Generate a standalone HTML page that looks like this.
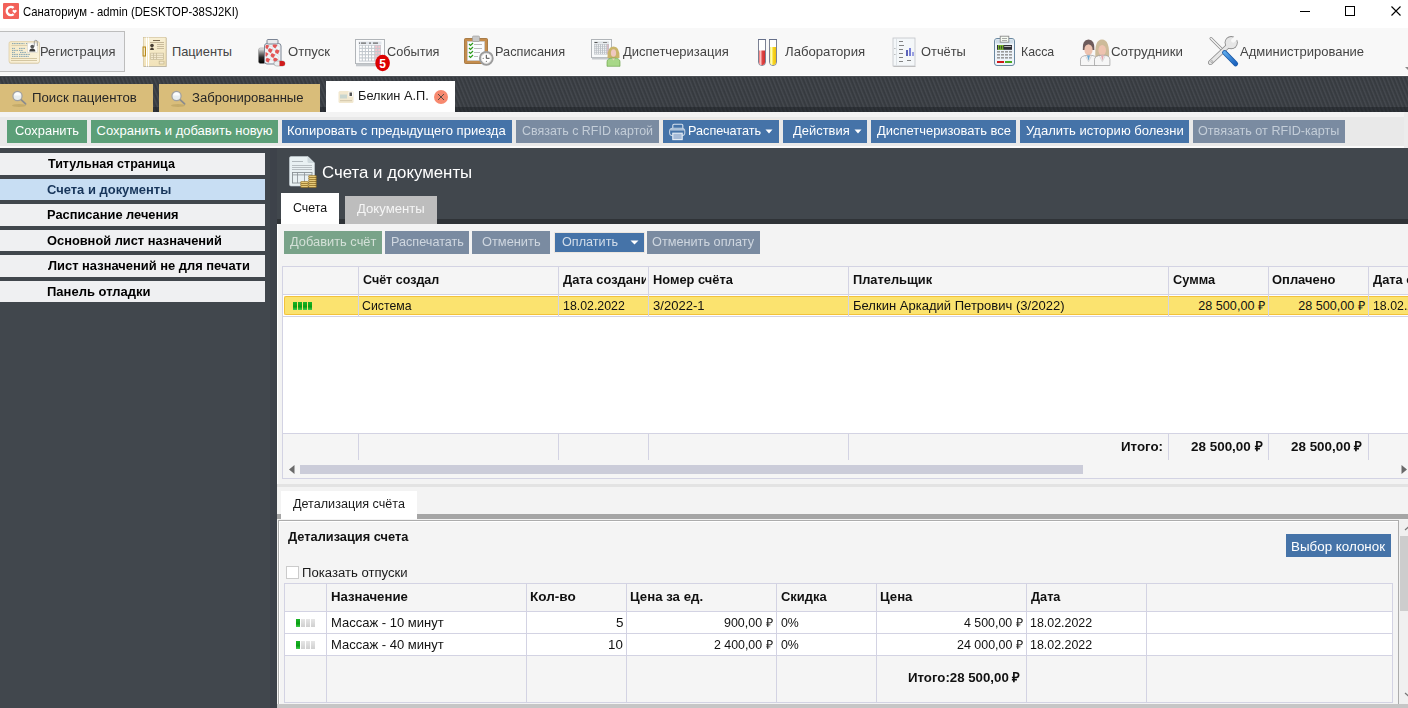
<!DOCTYPE html>
<html><head><meta charset="utf-8">
<style>
*{margin:0;padding:0;box-sizing:border-box}
html,body{width:1408px;height:708px;overflow:hidden;background:#41474d;font-family:"Liberation Sans",sans-serif;font-size:13px;color:#000;position:relative}
.a{position:absolute}
.t{position:absolute;white-space:nowrap;line-height:1}
svg{position:absolute;overflow:visible}
</style></head><body>
<div class="a" style="left:0px;top:0px;width:1408px;height:28px;background:#fff"></div>
<svg style="left:3px;top:3px" width="16" height="16" viewBox="0 0 16 16"><rect width="16" height="16" rx="1" fill="#f26159"/><path d="M10.6 4.9A4.1 4.1 0 1 0 10.6 11.1" fill="none" stroke="#fff" stroke-width="2.5"/><path d="M11.6 10.4l-2-1.9a1.1 1.1 0 0 1 2-1.1a1.1 1.1 0 0 1 2 1.1z" fill="#fff"/></svg>
<div class="t" style="left:23.44px;top:6px;font-size:12.2px;font-weight:normal;color:#000;transform:scaleX(0.9262);transform-origin:0 0;">Санаториум - admin (DESKTOP-38SJ2KI)</div>
<div class="a" style="left:1300px;top:11px;width:10px;height:1px;background:#000"></div>
<div class="a" style="left:1345px;top:6px;width:10px;height:10px;border:1px solid #000"></div>
<svg style="left:1391px;top:6px" width="10" height="10" viewBox="0 0 10 10"><path d="M0.5 0.5L9.5 9.5M9.5 0.5L0.5 9.5" stroke="#000" stroke-width="1.1"/></svg>
<div class="a" style="left:0px;top:28px;width:1408px;height:48px;background:#f8f8f8"></div>
<div class="a" style="left:0px;top:75px;width:1408px;height:1px;background:#ffffff"></div>
<div class="a" style="left:0px;top:31px;width:125px;height:41px;background:#eff0f3;border:1px solid #bdbdbd;border-left:none"></div>
<div class="t" style="left:40.47px;top:46px;font-size:12.8px;font-weight:normal;color:#444444;transform:scaleX(1.0075);transform-origin:0 0;">Регистрация</div>
<div class="t" style="left:171.98px;top:46px;font-size:12.8px;font-weight:normal;color:#444444;">Пациенты</div>
<div class="t" style="left:288.41px;top:46px;font-size:12.8px;font-weight:normal;color:#444444;transform:scaleX(1.0240);transform-origin:0 0;">Отпуск</div>
<div class="t" style="left:387.36px;top:46px;font-size:12.8px;font-weight:normal;color:#444444;transform:scaleX(0.9933);transform-origin:0 0;">События</div>
<div class="t" style="left:495.48px;top:46px;font-size:12.8px;font-weight:normal;color:#444444;transform:scaleX(0.9955);transform-origin:0 0;">Расписания</div>
<div class="t" style="left:622.73px;top:46px;font-size:12.8px;font-weight:normal;color:#444444;transform:scaleX(1.0160);transform-origin:0 0;">Диспетчеризация</div>
<div class="t" style="left:784.93px;top:46px;font-size:12.8px;font-weight:normal;color:#444444;transform:scaleX(1.0279);transform-origin:0 0;">Лаборатория</div>
<div class="t" style="left:921.02px;top:46px;font-size:12.8px;font-weight:normal;color:#444444;transform:scaleX(1.0043);transform-origin:0 0;">Отчёты</div>
<div class="t" style="left:1021.41px;top:46px;font-size:12.8px;font-weight:normal;color:#444444;transform:scaleX(0.9636);transform-origin:0 0;">Касса</div>
<div class="t" style="left:1111.34px;top:46px;font-size:12.8px;font-weight:normal;color:#444444;transform:scaleX(1.0367);transform-origin:0 0;">Сотрудники</div>
<div class="t" style="left:1240.40px;top:46px;font-size:12.8px;font-weight:normal;color:#444444;transform:scaleX(1.0170);transform-origin:0 0;">Администрирование</div>
<svg style="left:1404px;top:66px" width="7" height="5"><path d="M1 1h6l-3 3z" fill="#8a8a8a"/></svg>
<svg style="left:0;top:28px" width="1408" height="48" viewBox="0 28 1408 48">
<defs>
<linearGradient id="cream" x1="0" y1="0" x2="0" y2="1"><stop offset="0" stop-color="#f8efd3"/><stop offset="1" stop-color="#f1e2b8"/></linearGradient>
<linearGradient id="blk" x1="0" y1="0" x2="0" y2="1"><stop offset="0" stop-color="#e8e8e8"/><stop offset=".3" stop-color="#444"/><stop offset="1" stop-color="#111"/></linearGradient>
<linearGradient id="rtube" x1="0" y1="0" x2="1" y2="0"><stop offset="0" stop-color="#f07070"/><stop offset=".3" stop-color="#ffd0d0"/><stop offset=".5" stop-color="#e04848"/><stop offset="1" stop-color="#d03030"/></linearGradient>
<linearGradient id="ytube" x1="0" y1="0" x2="1" y2="0"><stop offset="0" stop-color="#f8f070"/><stop offset=".3" stop-color="#ffffc0"/><stop offset=".5" stop-color="#f8d820"/><stop offset="1" stop-color="#f0c010"/></linearGradient>
<linearGradient id="blueh" x1="0" y1="0" x2="1" y2="1"><stop offset="0" stop-color="#5aa8ea"/><stop offset="1" stop-color="#1c64c0"/></linearGradient>
</defs>
<!-- Регистрация card -->
<defs><linearGradient id="cardg" x1="0" y1="0" x2="1" y2="1"><stop offset="0" stop-color="#f5e8c4"/><stop offset="1" stop-color="#fbf4df"/></linearGradient></defs>
<rect x="9" y="42.2" width="30.5" height="21.6" rx="2" fill="#c9b68a" opacity=".55"/>
<rect x="9" y="41.5" width="30.5" height="21.5" rx="2" fill="url(#cardg)" stroke="#dccca4" stroke-width=".7"/>
<g stroke="#3f78a0" stroke-width=".75" stroke-dasharray="1.2 .5" opacity=".85">
<path d="M12 43.6h12.5M26 43.6h2"/>
<path d="M12 48.4h3M19 48.4h6"/><path d="M12 50.4h6M19 50.4h4"/><path d="M12 52.4h3M20 52.4h6"/><path d="M12 54.4h6M19 54.4h11"/><path d="M12 56.4h6M19 56.4h10"/>
</g>
<rect x="11.5" y="45.2" width="24" height=".7" fill="#d4c49c"/>
<rect x="11" y="58.1" width="26" height=".8" fill="#cbbb94"/><rect x="11" y="60.1" width="26" height=".8" fill="#cbbb94"/>
<rect x="27.5" y="43" width="10" height="9.5" fill="#fdfdfc" stroke="#d8d2c6" stroke-width=".6"/>
<circle cx="32.3" cy="46.6" r="1.9" fill="#5a5a5a"/><path d="M29.3 51.6q0-3 3-3t3 3z" fill="#3a3a3a"/>
<path d="M34.3 46.5V41.8a1.5 1.5 0 0 1 3 0V46" fill="none" stroke="#8a8a8a" stroke-width=".8"/>
<!-- Пациенты doc -->
<rect x="143.5" y="37.5" width="22.5" height="29" fill="url(#cream)" stroke="#cdbb8e" stroke-width=".6"/>
<rect x="144" y="66" width="22" height="1" fill="#aaa" opacity=".6"/>
<rect x="146" y="37.5" width="1" height="29" fill="#fff"/><rect x="148" y="37.5" width="1" height="29" fill="#fff"/>
<rect x="143" y="47" width="2.5" height="9" fill="none" stroke="#b88a1a" stroke-width="1"/>
<rect x="153" y="40" width="7" height="1" fill="#7a6a50"/>
<rect x="150" y="42" width="14" height="0.9" fill="#bfb090"/>
<circle cx="152" cy="45.5" r="1.8" fill="#4a4035"/><path d="M150 50q0-2.5 2-2.5t2 2.5z" fill="#4a4035"/>
<rect x="157" y="44" width="7" height=".8" fill="#bfb090"/><rect x="157" y="46" width="7" height=".8" fill="#bfb090"/><rect x="157" y="48" width="7" height=".8" fill="#bfb090"/>
<rect x="150.3" y="52.8" width="13.5" height="7" fill="#c8bc9c"/>
<g fill="#f4ead0"><rect x="151" y="53.5" width="2.2" height="1.4"/><rect x="154" y="53.5" width="2.2" height="1.4"/><rect x="157" y="53.5" width="6" height="1.4"/><rect x="151" y="55.6" width="2.2" height="1.4"/><rect x="154" y="55.6" width="2.2" height="1.4"/><rect x="157" y="55.6" width="6" height="1.4"/><rect x="151" y="57.7" width="2.2" height="1.4"/><rect x="154" y="57.7" width="2.2" height="1.4"/><rect x="157" y="57.7" width="6" height="1.4"/></g>
<rect x="159.2" y="61.2" width="4.8" height="2.8" fill="#f4ead0" stroke="#c6b890" stroke-width=".8"/>
<rect x="166" y="38" width=".8" height="29" fill="#b8ac90" opacity=".6"/>
<!-- Отпуск pills -->
<defs><linearGradient id="rollg" x1="0" y1="0" x2="0" y2="1"><stop offset="0" stop-color="#f4f4f4"/><stop offset=".25" stop-color="#9a9a9a"/><stop offset=".6" stop-color="#2a2a2a"/><stop offset="1" stop-color="#000"/></linearGradient></defs>
<rect x="258.5" y="48" width="7" height="15.5" rx="2" fill="url(#rollg)" stroke="#888" stroke-width=".5"/>
<rect x="264.5" y="43.5" width="16.5" height="20.5" rx="2.5" fill="#f0f3f5" stroke="#7c8594" stroke-width="1"/>
<rect x="267" y="39.5" width="11" height="4.5" rx="1" fill="#e8eaec" stroke="#7c8594" stroke-width="1"/>
<clipPath id="jarc"><rect x="265.5" y="44.5" width="14.5" height="18.5" rx="2"/></clipPath>
<g clip-path="url(#jarc)">
<g transform="translate(268.5 47.5) rotate(25)"><path d="M0 -1.9H-2.3A1.9 1.9 0 0 0 -2.3 1.9H0Z" fill="#e45656"/><path d="M0 -1.9H2.3A1.9 1.9 0 0 1 2.3 1.9H0Z" fill="#f4f6f8" stroke="#c8d0d6" stroke-width=".4"/></g><g transform="translate(276.5 47) rotate(35)"><path d="M0 -1.9H-2.3A1.9 1.9 0 0 0 -2.3 1.9H0Z" fill="#e45656"/><path d="M0 -1.9H2.3A1.9 1.9 0 0 1 2.3 1.9H0Z" fill="#f4f6f8" stroke="#c8d0d6" stroke-width=".4"/></g><g transform="translate(272 51.5) rotate(30)"><path d="M0 -1.9H-2.3A1.9 1.9 0 0 0 -2.3 1.9H0Z" fill="#e45656"/><path d="M0 -1.9H2.3A1.9 1.9 0 0 1 2.3 1.9H0Z" fill="#f4f6f8" stroke="#c8d0d6" stroke-width=".4"/></g><g transform="translate(279 52.5) rotate(25)"><path d="M0 -1.9H-2.3A1.9 1.9 0 0 0 -2.3 1.9H0Z" fill="#e45656"/><path d="M0 -1.9H2.3A1.9 1.9 0 0 1 2.3 1.9H0Z" fill="#f4f6f8" stroke="#c8d0d6" stroke-width=".4"/></g><g transform="translate(267.5 55.5) rotate(35)"><path d="M0 -1.9H-2.3A1.9 1.9 0 0 0 -2.3 1.9H0Z" fill="#e45656"/><path d="M0 -1.9H2.3A1.9 1.9 0 0 1 2.3 1.9H0Z" fill="#f4f6f8" stroke="#c8d0d6" stroke-width=".4"/></g><g transform="translate(274.5 56.5) rotate(30)"><path d="M0 -1.9H-2.3A1.9 1.9 0 0 0 -2.3 1.9H0Z" fill="#e45656"/><path d="M0 -1.9H2.3A1.9 1.9 0 0 1 2.3 1.9H0Z" fill="#f4f6f8" stroke="#c8d0d6" stroke-width=".4"/></g><g transform="translate(269.5 61) rotate(25)"><path d="M0 -1.9H-2.3A1.9 1.9 0 0 0 -2.3 1.9H0Z" fill="#e45656"/><path d="M0 -1.9H2.3A1.9 1.9 0 0 1 2.3 1.9H0Z" fill="#f4f6f8" stroke="#c8d0d6" stroke-width=".4"/></g><g transform="translate(277 61) rotate(35)"><path d="M0 -1.9H-2.3A1.9 1.9 0 0 0 -2.3 1.9H0Z" fill="#e45656"/><path d="M0 -1.9H2.3A1.9 1.9 0 0 1 2.3 1.9H0Z" fill="#f4f6f8" stroke="#c8d0d6" stroke-width=".4"/></g>
</g>
<rect x="274" y="61" width="11" height="5" rx="2.5" fill="#e8eef0" stroke="#8a8a8a" stroke-width=".5"/><path d="M279.5 61h3a2.5 2.5 0 0 1 0 5h-3z" fill="#d01c1c"/>
<!-- События calendar -->
<rect x="355.5" y="39.5" width="29" height="24" fill="#fafbfc" stroke="#b0b4b8" stroke-width="1"/>
<rect x="356" y="63.5" width="28.5" height="2.8" fill="#c4c8cc"/>
<rect x="358.5" y="41.5" width="23" height="3" fill="#dfe4ea"/><g fill="#666"><rect x="359" y="42.5" width="1" height="1.2"/><rect x="361" y="42.5" width="5" height="1.2"/><rect x="369" y="42.5" width="2" height="1.2"/><rect x="373" y="42.5" width="5" height="1.2"/></g>
<rect x="359" y="45" width="22" height="16.5" fill="#c2c8ce"/>
<rect x="359.7" y="45.7" width="2.1" height="2.1" fill="#fff"/><rect x="362.8" y="45.7" width="2.1" height="2.1" fill="#fff"/><rect x="365.9" y="45.7" width="2.1" height="2.1" fill="#fff"/><rect x="369.0" y="45.7" width="2.1" height="2.1" fill="#fff"/><rect x="372.1" y="45.7" width="2.1" height="2.1" fill="#fff"/><rect x="375.2" y="45.7" width="2.1" height="2.1" fill="#f6c4cc"/><rect x="378.3" y="45.7" width="2.1" height="2.1" fill="#f6c4cc"/><rect x="359.7" y="48.9" width="2.1" height="2.1" fill="#fff"/><rect x="362.8" y="48.9" width="2.1" height="2.1" fill="#fff"/><rect x="365.9" y="48.9" width="2.1" height="2.1" fill="#fff"/><rect x="369.0" y="48.9" width="2.1" height="2.1" fill="#fff"/><rect x="372.1" y="48.9" width="2.1" height="2.1" fill="#fff"/><rect x="375.2" y="48.9" width="2.1" height="2.1" fill="#f6c4cc"/><rect x="378.3" y="48.9" width="2.1" height="2.1" fill="#f6c4cc"/><rect x="359.7" y="52.1" width="2.1" height="2.1" fill="#fff"/><rect x="362.8" y="52.1" width="2.1" height="2.1" fill="#fff"/><rect x="365.9" y="52.1" width="2.1" height="2.1" fill="#fff"/><rect x="369.0" y="52.1" width="2.1" height="2.1" fill="#fff"/><rect x="372.1" y="52.1" width="2.1" height="2.1" fill="#fff"/><rect x="375.2" y="52.1" width="2.1" height="2.1" fill="#f6c4cc"/><rect x="378.3" y="52.1" width="2.1" height="2.1" fill="#f6c4cc"/><rect x="359.7" y="55.3" width="2.1" height="2.1" fill="#fff"/><rect x="362.8" y="55.3" width="2.1" height="2.1" fill="#fff"/><rect x="365.9" y="55.3" width="2.1" height="2.1" fill="#fff"/><rect x="369.0" y="55.3" width="2.1" height="2.1" fill="#fff"/><rect x="372.1" y="55.3" width="2.1" height="2.1" fill="#fff"/><rect x="375.2" y="55.3" width="2.1" height="2.1" fill="#f6c4cc"/><rect x="378.3" y="55.3" width="2.1" height="2.1" fill="#f6c4cc"/><rect x="359.7" y="58.5" width="2.1" height="2.1" fill="#fff"/><rect x="362.8" y="58.5" width="2.1" height="2.1" fill="#fff"/><rect x="365.9" y="58.5" width="2.1" height="2.1" fill="#fff"/><rect x="369.0" y="58.5" width="2.1" height="2.1" fill="#fff"/><rect x="372.1" y="58.5" width="2.1" height="2.1" fill="#fff"/><rect x="375.2" y="58.5" width="2.1" height="2.1" fill="#f6c4cc"/><rect x="378.3" y="58.5" width="2.1" height="2.1" fill="#f6c4cc"/>
<ellipse cx="382.6" cy="63" rx="7.3" ry="8.3" fill="#dc0000"/>
<text x="382.6" y="67.6" font-family="Liberation Sans" font-weight="bold" font-size="12" fill="#fff" text-anchor="middle">5</text>
<!-- Расписания clipboard -->
<rect x="464.5" y="38.5" width="23" height="25" rx="1" fill="#c48c4c" stroke="#9a6a30" stroke-width=".8"/>
<rect x="467.5" y="41.5" width="17" height="19" fill="#fafcff" stroke="#c0d0e0" stroke-width=".5"/>
<rect x="472.5" y="36" width="7" height="5.5" rx="1" fill="#c8c8c8" stroke="#999" stroke-width=".6"/>
<g fill="none" stroke="#2a9a1a" stroke-width="1.2"><path d="M469 44l1.5 1.5 2.5-2.5"/><path d="M469 48l1.5 1.5 2.5-2.5"/><path d="M469 52l1.5 1.5 2.5-2.5"/><path d="M469 56l1.5 1.5 2.5-2.5"/></g>
<g fill="#aaa"><rect x="474" y="44" width="8" height=".8"/><rect x="474" y="48" width="8" height=".8"/><rect x="474" y="52" width="6" height=".8"/><rect x="474" y="56" width="4" height=".8"/></g>
<circle cx="486.3" cy="58.3" r="6.4" fill="#fff" stroke="#9c9c9c" stroke-width="2"/><circle cx="486.3" cy="58.3" r="5" fill="none" stroke="#d8d8d8" stroke-width=".8"/>
<path d="M486.3 54.8v3.5h3.2" fill="none" stroke="#333" stroke-width=".9"/><circle cx="483.2" cy="58.3" r=".5" fill="#333"/><circle cx="486.3" cy="61.2" r=".5" fill="#333"/>
<!-- Диспетчеризация -->
<rect x="591.5" y="39.5" width="20" height="18" fill="#f8fafb" stroke="#b0b4b8" stroke-width="1"/>
<rect x="592" y="57.5" width="19.5" height="2" fill="#c4c8cc"/>
<rect x="594" y="41.5" width="15" height="2" fill="#d8dde2"/><rect x="594.5" y="42" width="3" height="1" fill="#555"/><rect x="603" y="42" width="4" height="1" fill="#888"/>
<rect x="594" y="44" width="15" height="10.5" fill="#b8bec4"/>
<rect x="594.6" y="44.6" width="1.2" height="1.2" fill="#fff"/><rect x="596.7" y="44.6" width="1.2" height="1.2" fill="#fff"/><rect x="598.8" y="44.6" width="1.2" height="1.2" fill="#fff"/><rect x="600.9" y="44.6" width="1.2" height="1.2" fill="#fff"/><rect x="603.0" y="44.6" width="1.2" height="1.2" fill="#fff"/><rect x="605.1" y="44.6" width="1.2" height="1.2" fill="#fff"/><rect x="607.2" y="44.6" width="1.2" height="1.2" fill="#f4b8c0"/><rect x="594.6" y="46.6" width="1.2" height="1.2" fill="#fff"/><rect x="596.7" y="46.6" width="1.2" height="1.2" fill="#fff"/><rect x="598.8" y="46.6" width="1.2" height="1.2" fill="#fff"/><rect x="600.9" y="46.6" width="1.2" height="1.2" fill="#fff"/><rect x="603.0" y="46.6" width="1.2" height="1.2" fill="#fff"/><rect x="605.1" y="46.6" width="1.2" height="1.2" fill="#fff"/><rect x="607.2" y="46.6" width="1.2" height="1.2" fill="#f4b8c0"/><rect x="594.6" y="48.6" width="1.2" height="1.2" fill="#fff"/><rect x="596.7" y="48.6" width="1.2" height="1.2" fill="#fff"/><rect x="598.8" y="48.6" width="1.2" height="1.2" fill="#fff"/><rect x="600.9" y="48.6" width="1.2" height="1.2" fill="#fff"/><rect x="603.0" y="48.6" width="1.2" height="1.2" fill="#fff"/><rect x="605.1" y="48.6" width="1.2" height="1.2" fill="#fff"/><rect x="607.2" y="48.6" width="1.2" height="1.2" fill="#f4b8c0"/><rect x="594.6" y="50.6" width="1.2" height="1.2" fill="#fff"/><rect x="596.7" y="50.6" width="1.2" height="1.2" fill="#fff"/><rect x="598.8" y="50.6" width="1.2" height="1.2" fill="#fff"/><rect x="600.9" y="50.6" width="1.2" height="1.2" fill="#fff"/><rect x="603.0" y="50.6" width="1.2" height="1.2" fill="#fff"/><rect x="605.1" y="50.6" width="1.2" height="1.2" fill="#fff"/><rect x="607.2" y="50.6" width="1.2" height="1.2" fill="#f4b8c0"/><rect x="594.6" y="52.6" width="1.2" height="1.2" fill="#fff"/><rect x="596.7" y="52.6" width="1.2" height="1.2" fill="#fff"/><rect x="598.8" y="52.6" width="1.2" height="1.2" fill="#fff"/><rect x="600.9" y="52.6" width="1.2" height="1.2" fill="#fff"/><rect x="603.0" y="52.6" width="1.2" height="1.2" fill="#fff"/><rect x="605.1" y="52.6" width="1.2" height="1.2" fill="#fff"/><rect x="607.2" y="52.6" width="1.2" height="1.2" fill="#f4b8c0"/>
<path d="M607.5 58q-.5-11.5 6-11.5t6 11.5z" fill="#c9b46a"/>
<ellipse cx="613.5" cy="53" rx="2.6" ry="3.8" fill="#efc8c0"/>
<path d="M607 66.3v-4.5q0-3.8 6.5-3.8t6.5 3.8v4.5z" fill="#a8d888" stroke="#5e9a3a" stroke-width=".6"/>
<path d="M612 58.5l1.5 2 1.5-2z" fill="#efc8c0"/>
<!-- Лаборатория tubes -->
<path d="M758.5 39v23a3.5 3.5 0 0 0 7 0v-23" fill="#fff" stroke="#7c8294" stroke-width="1"/>
<path d="M759 50.5h6v11.5a3 3 0 0 1-6 0z" fill="url(#rtube)"/>
<rect x="758" y="39" width="8" height="1" fill="#66708a"/>
<path d="M769.5 39v23a3.5 3.5 0 0 0 7 0v-23" fill="#fff" stroke="#7c8294" stroke-width="1"/>
<path d="M770 47h6v15a3 3 0 0 1-6 0z" fill="url(#ytube)"/>
<rect x="769" y="39" width="8" height="1" fill="#66708a"/>
<!-- Отчёты doc -->
<rect x="893" y="38" width="22" height="28" fill="#f4f7f9" stroke="#c0c4c8" stroke-width=".8"/>
<rect x="893.5" y="66" width="22" height="1" fill="#999" opacity=".5"/>
<rect x="896" y="38.5" width=".8" height="27" fill="#d8dde2"/>
<g fill="#666"><rect x="899" y="41" width="4" height=".8"/><rect x="899" y="45" width="5" height=".8"/><rect x="899" y="49" width="4" height=".8"/><rect x="899" y="53" width="4" height=".8"/><rect x="899" y="57" width="4" height=".8"/><rect x="899" y="61" width="4" height=".8"/><rect x="907" y="60" width="4" height=".8"/><rect x="894.5" y="48" width=".8" height=".8"/><rect x="894.5" y="54" width=".8" height=".8"/></g>
<rect x="906" y="50" width="2" height="6" fill="#5c64b8"/><rect x="909" y="48" width="2" height="8" fill="#7880d8"/><rect x="912" y="52" width="2" height="4" fill="#9aa0e0"/>
<!-- Касса register -->
<rect x="994.5" y="38.5" width="20" height="27" rx="2.5" fill="#eef4fa" stroke="#6a88a0" stroke-width="1"/>
<rect x="995.5" y="39.5" width="18" height="4" fill="#cfdde8"/>
<rect x="1000.2" y="36.2" width="8.6" height="6" fill="#f6faf2" stroke="#8a8a8a" stroke-width=".9"/>
<rect x="1002" y="38" width="5" height=".7" fill="#888"/><rect x="1002" y="40" width="5" height=".7" fill="#888"/>
<rect x="997" y="45" width="15" height="4.8" fill="#2e2e34"/>
<g fill="#8ee02a"><rect x="998.3" y="45.3" width=".9" height="4.2"/><rect x="1000.3" y="45.3" width=".9" height="4.2"/><rect x="1002.3" y="45.3" width=".9" height="4.2"/><rect x="998" y="45.3" width="5.5" height=".6"/><rect x="998" y="48.9" width="5.5" height=".6"/></g>
<rect x="1004.2" y="46" width="7" height="1" fill="#b8b8b8"/>
<g fill="#9a9a9a"><rect x="997" y="51" width="3" height="1.6"/><rect x="1001" y="51" width="3" height="1.6"/><rect x="1005" y="51" width="3" height="1.6"/><rect x="1009" y="51" width="3" height="1.6"/><rect x="997" y="54" width="3" height="1.6"/><rect x="1001" y="54" width="3" height="1.6"/><rect x="1005" y="54" width="3" height="1.6"/><rect x="1009" y="54" width="3" height="1.6"/><rect x="997" y="57" width="3" height="1.6"/><rect x="1001" y="57" width="3" height="1.6"/><rect x="1005" y="57" width="3" height="1.6"/><rect x="1009" y="57" width="3" height="1.6"/></g>
<rect x="997" y="61" width="7" height="2" fill="#d01818"/><rect x="1005" y="61" width="7" height="2" fill="#4aa820"/>
<!-- Сотрудники -->
<path d="M1082.8 50q-.8-10.5 5.7-10.5t5.9 10.5z" fill="#6e5c5c"/>
<ellipse cx="1088.5" cy="49.8" rx="4.1" ry="5.6" fill="#eec3b0"/>
<path d="M1084 46q0-4.5 4.5-4.5t4.6 4.5q-2-2-4.6-2t-4.5 2z" fill="#6e5c5c"/>
<path d="M1080.5 65.5v-6q0-4 8-4.3t8 4.3v6z" fill="#f6f6f6" stroke="#9a9a9a" stroke-width=".7"/>
<path d="M1087 55.4h3l-1.5 5.5z" fill="#6aa6d0"/>
<path d="M1085.5 55.8l3 6 3-6" fill="none" stroke="#c4c4c4" stroke-width=".6"/>
<path d="M1095.5 58q-1.5-18.5 6.5-18.5t7 18.5z" fill="#cdbb9a"/>
<ellipse cx="1102.2" cy="50.3" rx="3.8" ry="5.3" fill="#eec3b0"/>
<path d="M1098 47q0-4.5 4.2-4.5t4.2 4.5q-1.5-3-4.2-3t-4.2 3z" fill="#cdbb9a"/>
<path d="M1094.5 65.5v-6q0-4 7.7-4.3t7.7 4.3v6z" fill="#f6f6f6" stroke="#9a9a9a" stroke-width=".7"/>
<path d="M1101 55.6h2.8l-1.4 5.3z" fill="#e4a6b0"/>
<path d="M1099.5 56l2.8 5.6 2.8-5.6" fill="none" stroke="#c4c4c4" stroke-width=".6"/>
<!-- Администрирование -->
<mask id="wm"><rect x="1195" y="30" width="50" height="42" fill="#fff"/><g transform="translate(1231.2 42.6) rotate(-45)"><rect x="0.8" y="-2.1" width="12" height="4.2" rx="2.1" fill="#000"/></g></mask>
<path d="M1211 38.5l13 13" stroke="#8a8a8a" stroke-width="3" stroke-linecap="round"/>
<path d="M1211 38.5l13 13" stroke="#f2f2f2" stroke-width="1.6" stroke-linecap="round"/>
<g mask="url(#wm)">
<path d="M1228.5 45.5L1210.5 62.5" stroke="#8c8c8c" stroke-width="5" stroke-linecap="round"/>
<circle cx="1231.2" cy="42.6" r="6.6" fill="#8c8c8c"/>
<path d="M1228.5 45.5L1210.5 62.5" stroke="#e6e6e6" stroke-width="3.3" stroke-linecap="round"/>
<circle cx="1231.2" cy="42.6" r="5.7" fill="#e6e6e6"/>
</g>
<circle cx="1211.8" cy="61.6" r="1" fill="none" stroke="#8c8c8c" stroke-width=".6"/>
<path d="M1224.6 52.6l11 11.2" stroke="#1a5aa8" stroke-width="5" stroke-linecap="round"/>
<path d="M1224.6 52.6l11 11.2" stroke="url(#blueh)" stroke-width="3.4" stroke-linecap="round"/>
</svg>

<div class="a" style="left:0px;top:76px;width:1408px;height:36px;background:repeating-linear-gradient(68deg,#464a50 0px,#393d42 1.3px,#35393e 2.3px,#464a50 3.7px)"></div>
<div class="a" style="left:0px;top:76px;width:1408px;height:1px;background:#4c5055"></div>
<div class="a" style="left:0px;top:107px;width:1408px;height:5px;background:repeating-linear-gradient(68deg,#30343a 0px,#272b2f 1.5px,#30343a 3.7px)"></div>
<div class="a" style="left:0px;top:84px;width:153px;height:28px;background:#d9bd7a"></div>
<div class="a" style="left:159px;top:84px;width:161px;height:28px;background:#d9bd7a"></div>
<div class="a" style="left:326px;top:81px;width:129px;height:31px;background:#fff"></div>
<div class="t" style="left:31.54px;top:92px;font-size:12.5px;font-weight:normal;color:#262626;transform:scaleX(1.0586);transform-origin:0 0;">Поиск пациентов</div>
<div class="t" style="left:192.01px;top:92px;font-size:12.5px;font-weight:normal;color:#262626;transform:scaleX(1.0468);transform-origin:0 0;">Забронированные</div>
<div class="t" style="left:357.78px;top:90px;font-size:12.5px;font-weight:normal;color:#1a1a1a;transform:scaleX(1.0234);transform-origin:0 0;">Белкин А.П.</div>
<svg style="left:9px;top:88px" width="20" height="20" viewBox="0 0 20 20"><ellipse cx="10" cy="17.5" rx="7" ry="1.5" fill="#b89e5e" opacity=".6"/><path d="M11.8 11.3L16.6 15.8" stroke="#8c8c8c" stroke-width="1.8" stroke-linecap="round"/><circle cx="8.5" cy="8" r="4.6" fill="#e8eef0" stroke="#a0a0a0" stroke-width="1.2"/><path d="M5.3 7.6a3.2 3.2 0 0 1 6.4 0z" fill="#fff" opacity=".85"/></svg>
<svg style="left:168px;top:88px" width="20" height="20" viewBox="0 0 20 20"><ellipse cx="10" cy="17.5" rx="7" ry="1.5" fill="#b89e5e" opacity=".6"/><path d="M11.8 11.3L16.6 15.8" stroke="#8c8c8c" stroke-width="1.8" stroke-linecap="round"/><circle cx="8.5" cy="8" r="4.6" fill="#e8eef0" stroke="#a0a0a0" stroke-width="1.2"/><path d="M5.3 7.6a3.2 3.2 0 0 1 6.4 0z" fill="#fff" opacity=".85"/></svg>
<svg style="left:338px;top:90px" width="16" height="14" viewBox="0 0 16 14"><rect x="0.5" y="1" width="15" height="12" rx="1.5" fill="#f2e8cf"/><rect x="2" y="4.5" width="7" height="4" fill="#c9d6cf"/><rect x="2" y="10" width="12" height="1.2" fill="#d8ccb0"/><rect x="10.5" y="1.5" width="4.5" height="5" fill="#fff"/><rect x="11.5" y="2.5" width="2.5" height="3.5" fill="#555"/></svg>
<svg style="left:434px;top:90px" width="14" height="14" viewBox="0 0 14 14"><circle cx="7" cy="7" r="7" fill="#f7896f"/><path d="M4 4L10 10M10 4L4 10" stroke="#5a4a44" stroke-width="1"/></svg>
<div class="a" style="left:0px;top:111.5px;width:1408px;height:1px;background:#fff"></div>
<div class="a" style="left:0px;top:112px;width:1408px;height:36px;background:#e9e9e9"></div>
<div class="a" style="left:0px;top:112px;width:1404px;height:5px;background:#f3f3f3"></div>
<div class="a" style="left:1404px;top:112px;width:4px;height:36px;background:#ececec"></div>
<div class="a" style="left:0px;top:146px;width:1404px;height:2px;background:#fafafa"></div>
<div class="a" style="left:7px;top:120px;width:80px;height:23px;background:#5c9f78"></div>
<div class="a" style="left:91px;top:120px;width:187px;height:23px;background:#5c9f78"></div>
<div class="a" style="left:282px;top:120px;width:230px;height:23px;background:#4573a8"></div>
<div class="a" style="left:516px;top:120px;width:143px;height:23px;background:#7a8ba1"></div>
<div class="a" style="left:783px;top:120px;width:84px;height:23px;background:#4573a8"></div>
<div class="a" style="left:871px;top:120px;width:145px;height:23px;background:#4573a8"></div>
<div class="a" style="left:1020px;top:120px;width:169px;height:23px;background:#4573a8"></div>
<div class="a" style="left:1193px;top:120px;width:152px;height:23px;background:#7a8ba1"></div>
<div class="a" style="left:662px;top:119px;width:118px;height:25px;background:#4573a8;border:1px solid #efe9e2"></div>
<div class="t" style="left:14.86px;top:124px;font-size:13px;font-weight:normal;color:#ffffff;transform:scaleX(0.9918);transform-origin:0 0;">Сохранить</div>
<div class="t" style="left:96.55px;top:124px;font-size:13px;font-weight:normal;color:#ffffff;">Сохранить и добавить новую</div>
<div class="t" style="left:287.26px;top:124px;font-size:13px;font-weight:normal;color:#ffffff;transform:scaleX(1.0032);transform-origin:0 0;">Копировать с предыдущего приезда</div>
<div class="t" style="left:522.08px;top:124px;font-size:13px;font-weight:normal;color:#c3cdd8;transform:scaleX(0.9572);transform-origin:0 0;">Связать с RFID картой</div>
<div class="t" style="left:687.79px;top:124px;font-size:13px;font-weight:normal;color:#ffffff;transform:scaleX(0.9751);transform-origin:0 0;">Распечатать</div>
<div class="t" style="left:792.54px;top:124px;font-size:13px;font-weight:normal;color:#ffffff;transform:scaleX(0.9959);transform-origin:0 0;">Действия</div>
<div class="t" style="left:876.64px;top:124px;font-size:13px;font-weight:normal;color:#ffffff;transform:scaleX(0.9960);transform-origin:0 0;">Диспетчеризовать все</div>
<div class="t" style="left:1025.67px;top:124px;font-size:13px;font-weight:normal;color:#ffffff;transform:scaleX(1.0038);transform-origin:0 0;">Удалить историю болезни</div>
<div class="t" style="left:1197.93px;top:124px;font-size:13px;font-weight:normal;color:#c3cdd8;transform:scaleX(0.9706);transform-origin:0 0;">Отвязать от RFID-карты</div>
<svg style="left:765px;top:129px" width="8" height="5"><path d="M0.5 0.5h7l-3.5 4z" fill="#fff"/></svg>
<svg style="left:854px;top:129px" width="8" height="5"><path d="M0.5 0.5h7l-3.5 4z" fill="#fff"/></svg>
<svg style="left:668px;top:123px" width="18" height="18" viewBox="668 123 18 18"><path d="M672.8 128.2v-2.8a1.2 1.2 0 0 1 1.2-1.2h7.6a1.2 1.2 0 0 1 1.2 1.2v2.8" stroke="#d8e2ee" fill="none" stroke-width="1.1"/><rect x="669.6" y="128.2" width="15.2" height="7.6" rx="3.2" fill="none" stroke="#c4d3e4" stroke-width="1.1"/><rect x="670.5" y="128.8" width="13.5" height="1.8" fill="#c4d3e4" opacity=".8"/><rect x="672.8" y="133.2" width="9.4" height="6.4" fill="#a6bbd7" stroke="#e6eef6" stroke-width="1.1"/></svg>
<div class="a" style="left:0px;top:148px;width:269px;height:560px;background:#41474d"></div>
<div class="a" style="left:270px;top:148px;width:7px;height:560px;background:#3d424a"></div>
<div class="a" style="left:0px;top:153px;width:265px;height:22px;background:#eff0f2"></div>
<div class="t" style="left:47.87px;top:157px;font-size:13.7px;font-weight:bold;color:#000;transform:scaleX(0.9151);transform-origin:0 0;">Титульная страница</div>
<div class="a" style="left:0px;top:179px;width:265px;height:21px;background:#c8def3"></div>
<div class="t" style="left:47.48px;top:183px;font-size:13.7px;font-weight:bold;color:#17355a;transform:scaleX(0.9470);transform-origin:0 0;">Счета и документы</div>
<div class="a" style="left:0px;top:204px;width:265px;height:22px;background:#eff0f2"></div>
<div class="t" style="left:47.17px;top:208px;font-size:13.7px;font-weight:bold;color:#000;transform:scaleX(0.9376);transform-origin:0 0;">Расписание лечения</div>
<div class="a" style="left:0px;top:230px;width:265px;height:21px;background:#eff0f2"></div>
<div class="t" style="left:47.49px;top:234px;font-size:13.7px;font-weight:bold;color:#000;transform:scaleX(0.9381);transform-origin:0 0;">Основной лист назначений</div>
<div class="a" style="left:0px;top:255px;width:265px;height:22px;background:#eff0f2"></div>
<div class="t" style="left:48.00px;top:259px;font-size:13.7px;font-weight:bold;color:#000;transform:scaleX(0.9430);transform-origin:0 0;">Лист назначений не для печати</div>
<div class="a" style="left:0px;top:281px;width:265px;height:21px;background:#eff0f2"></div>
<div class="t" style="left:47.15px;top:285px;font-size:13.7px;font-weight:bold;color:#000;transform:scaleX(0.9500);transform-origin:0 0;">Панель отладки</div>
<div class="a" style="left:277px;top:148px;width:1131px;height:71px;background:#41474d"></div>
<svg style="left:284px;top:152px" width="38" height="40" viewBox="284 152 38 40">
<path d="M291 156.5h17l6.5 6.5v21.5a1.5 1.5 0 0 1-1.5 1.5h-22a1.5 1.5 0 0 1-1.5-1.5v-26.5a1.5 1.5 0 0 1 1.5-1.5z" fill="#e9f1f3" stroke="#c8d2d6" stroke-width=".6"/>
<path d="M307.5 156.5v5a1.5 1.5 0 0 0 1.5 1.5h5.5z" fill="#cdd8dc"/>
<g fill="#aab2b6"><rect x="292" y="161" width="11" height=".9"/><rect x="292" y="165" width="20" height=".8"/><rect x="292" y="167" width="20" height=".8"/><rect x="292" y="169" width="20" height=".8"/></g>
<rect x="292.5" y="172.5" width="19.5" height="10.5" fill="none" stroke="#8a9296" stroke-width=".9"/>
<rect x="292.5" y="174.5" width="19.5" height=".8" fill="#8a9296"/>
<rect x="297" y="172.5" width=".8" height="10.5" fill="#8a9296"/><rect x="304" y="172.5" width=".8" height="10.5" fill="#8a9296"/>
<g fill="#c9a24a" stroke="#8a6a20" stroke-width=".5">
<rect x="308.5" y="175.5" width="8" height="2" rx="1"/><rect x="308.5" y="177.5" width="8" height="2" rx="1"/><rect x="308.5" y="179.5" width="8" height="2" rx="1"/><rect x="308.5" y="181.5" width="8" height="2" rx="1"/><rect x="308.5" y="183.5" width="8" height="2" rx="1"/><rect x="308.5" y="185.5" width="8" height="2" rx="1"/>
<rect x="300.5" y="181.5" width="8" height="2" rx="1"/><rect x="300.5" y="183.5" width="8" height="2" rx="1"/><rect x="300.5" y="185.5" width="8" height="2" rx="1"/>
</g>
<g fill="#f2dc90"><rect x="309.5" y="176" width="6" height=".7"/><rect x="309.5" y="178" width="6" height=".7"/><rect x="309.5" y="180" width="6" height=".7"/><rect x="309.5" y="182" width="6" height=".7"/><rect x="309.5" y="184" width="6" height=".7"/><rect x="309.5" y="186" width="6" height=".7"/><rect x="301.5" y="182" width="6" height=".7"/><rect x="301.5" y="184" width="6" height=".7"/><rect x="301.5" y="186" width="6" height=".7"/></g>
</svg>

<div class="t" style="left:322.46px;top:164px;font-size:16.3px;font-weight:normal;color:#ffffff;transform:scaleX(1.0342);transform-origin:0 0;">Счета и документы</div>
<div class="a" style="left:277px;top:219px;width:1131px;height:5px;background:#2f3337"></div>
<div class="a" style="left:281px;top:193px;width:58px;height:31px;background:#fff"></div>
<div class="t" style="left:292.68px;top:202px;font-size:12.3px;font-weight:normal;color:#111;transform:scaleX(1.0044);transform-origin:0 0;">Счета</div>
<div class="a" style="left:345px;top:196px;width:92px;height:28px;background:#bdbdbd"></div>
<div class="t" style="left:356.93px;top:203px;font-size:12.3px;font-weight:normal;color:#f5f5f5;transform:scaleX(1.0689);transform-origin:0 0;">Документы</div>
<div class="a" style="left:277px;top:224px;width:1131px;height:260px;background:#f3f3f3"></div>
<div class="a" style="left:277px;top:224px;width:1px;height:260px;background:#fff"></div>
<div class="a" style="left:284px;top:231px;width:98px;height:23px;background:#79a389"></div>
<div class="a" style="left:385px;top:231px;width:84px;height:23px;background:#7a8ba1"></div>
<div class="a" style="left:472px;top:231px;width:78px;height:23px;background:#7a8ba1"></div>
<div class="a" style="left:647px;top:231px;width:113px;height:23px;background:#7a8ba1"></div>
<div class="a" style="left:553.5px;top:231.8px;width:91px;height:21.5px;background:#4573a8;border:1px solid #ece6df"></div>
<div class="t" style="left:289.84px;top:236px;font-size:12.6px;font-weight:normal;color:#d3e0d7;transform:scaleX(1.0206);transform-origin:0 0;">Добавить счёт</div>
<div class="t" style="left:390.79px;top:236px;font-size:12.6px;font-weight:normal;color:#cfd7e0;transform:scaleX(1.0032);transform-origin:0 0;">Распечатать</div>
<div class="t" style="left:481.82px;top:236px;font-size:12.6px;font-weight:normal;color:#cfd7e0;transform:scaleX(1.0179);transform-origin:0 0;">Отменить</div>
<div class="t" style="left:562.43px;top:236px;font-size:12.6px;font-weight:normal;color:#d3deea;transform:scaleX(1.0042);transform-origin:0 0;">Оплатить</div>
<div class="t" style="left:651.93px;top:236px;font-size:12.6px;font-weight:normal;color:#cfd7e0;transform:scaleX(1.0086);transform-origin:0 0;">Отменить оплату</div>
<svg style="left:630px;top:240px" width="9" height="5"><path d="M0.5 0.5h8l-4 4z" fill="#fff"/></svg>
<div class="a" style="left:282px;top:266px;width:1126px;height:213px;background:#fff;border:1px solid #d3d3e3;border-right:none"></div>
<div class="a" style="left:283px;top:267px;width:1125px;height:27px;background:#f5f5f5"></div>
<div class="a" style="left:283px;top:294px;width:1125px;height:1px;background:#d3d3e3"></div>
<div class="a" style="left:284px;top:296px;width:1124px;height:19px;background:#fbe36f;border:1px solid #f2c23c;border-right:none;border-radius:2px 0 0 2px"></div>
<div class="a" style="left:283px;top:316px;width:1125px;height:1px;background:#d3d3e3"></div>
<div class="a" style="left:283px;top:433px;width:1125px;height:1px;background:#d3d3e3"></div>
<div class="a" style="left:283px;top:434px;width:1125px;height:44px;background:#f5f5f5"></div>
<div class="a" style="left:358px;top:267px;width:1px;height:49px;background:#d3d3e3"></div>
<div class="a" style="left:358px;top:434px;width:1px;height:26px;background:#d3d3e3"></div>
<div class="a" style="left:558px;top:267px;width:1px;height:49px;background:#d3d3e3"></div>
<div class="a" style="left:558px;top:434px;width:1px;height:26px;background:#d3d3e3"></div>
<div class="a" style="left:648px;top:267px;width:1px;height:49px;background:#d3d3e3"></div>
<div class="a" style="left:648px;top:434px;width:1px;height:26px;background:#d3d3e3"></div>
<div class="a" style="left:848px;top:267px;width:1px;height:49px;background:#d3d3e3"></div>
<div class="a" style="left:848px;top:434px;width:1px;height:26px;background:#d3d3e3"></div>
<div class="a" style="left:1168px;top:267px;width:1px;height:49px;background:#d3d3e3"></div>
<div class="a" style="left:1168px;top:434px;width:1px;height:26px;background:#d3d3e3"></div>
<div class="a" style="left:1268px;top:267px;width:1px;height:49px;background:#d3d3e3"></div>
<div class="a" style="left:1268px;top:434px;width:1px;height:26px;background:#d3d3e3"></div>
<div class="a" style="left:1368px;top:267px;width:1px;height:49px;background:#d3d3e3"></div>
<div class="a" style="left:1368px;top:434px;width:1px;height:26px;background:#d3d3e3"></div>
<div class="a" style="left:559px;top:267px;width:87px;height:27px;overflow:hidden">
<div class="t" style="left:4.14px;top:6px;font-size:13.7px;font-weight:bold;color:#111;transform:scaleX(0.9400);transform-origin:0 0;">Дата создания</div>
</div>
<div class="a" style="left:1369px;top:267px;width:39px;height:49px;overflow:hidden">
<div class="t" style="left:3.94px;top:6px;font-size:13.7px;font-weight:bold;color:#111;transform:scaleX(0.9400);transform-origin:0 0;">Дата оплаты</div>
<div class="t" style="left:4.07px;top:33px;font-size:12.6px;font-weight:normal;color:#111;transform:scaleX(0.9800);transform-origin:0 0;">18.02.2022</div>
</div>
<div class="t" style="left:362.50px;top:273px;font-size:13.7px;font-weight:bold;color:#111;transform:scaleX(0.9147);transform-origin:0 0;">Счёт создал</div>
<div class="t" style="left:652.66px;top:273px;font-size:13.7px;font-weight:bold;color:#111;transform:scaleX(0.9383);transform-origin:0 0;">Номер счёта</div>
<div class="t" style="left:852.97px;top:273px;font-size:13.7px;font-weight:bold;color:#111;transform:scaleX(0.9374);transform-origin:0 0;">Плательщик</div>
<div class="t" style="left:1172.79px;top:273px;font-size:13.7px;font-weight:bold;color:#111;transform:scaleX(0.9347);transform-origin:0 0;">Сумма</div>
<div class="t" style="left:1272.48px;top:273px;font-size:13.7px;font-weight:bold;color:#111;transform:scaleX(0.9457);transform-origin:0 0;">Оплачено</div>
<div class="t" style="left:362.38px;top:300px;font-size:12.6px;font-weight:normal;color:#111;transform:scaleX(0.9768);transform-origin:0 0;">Система</div>
<div class="t" style="left:563.07px;top:300px;font-size:12.6px;font-weight:normal;color:#111;transform:scaleX(0.9816);transform-origin:0 0;">18.02.2022</div>
<div class="t" style="left:653.04px;top:300px;font-size:12.6px;font-weight:normal;color:#111;transform:scaleX(1.0366);transform-origin:0 0;">3/2022-1</div>
<div class="t" style="left:852.76px;top:300px;font-size:12.6px;font-weight:normal;color:#111;transform:scaleX(1.0346);transform-origin:0 0;">Белкин Аркадий Петрович (3/2022)</div>
<div class="t" style="left:1198.37px;top:300px;font-size:12.6px;font-weight:normal;color:#111;">28 500,00 ₽</div>
<div class="t" style="left:1298.17px;top:300px;font-size:12.6px;font-weight:normal;color:#111;">28 500,00 ₽</div>
<div class="a" style="left:293px;top:302px;width:4px;height:8px;background:linear-gradient(#19b526,#0a9c14 60%,#3fd04a)"></div>
<div class="a" style="left:298px;top:302px;width:4px;height:8px;background:linear-gradient(#19b526,#0a9c14 60%,#3fd04a)"></div>
<div class="a" style="left:303px;top:302px;width:4px;height:8px;background:linear-gradient(#19b526,#0a9c14 60%,#3fd04a)"></div>
<div class="a" style="left:308px;top:302px;width:4px;height:8px;background:linear-gradient(#19b526,#0a9c14 60%,#3fd04a)"></div>
<div class="t" style="left:1121.13px;top:440px;font-size:13.7px;font-weight:bold;color:#111;transform:scaleX(0.9723);transform-origin:0 0;">Итого:</div>
<div class="t" style="left:1190.70px;top:440px;font-size:13.7px;font-weight:bold;color:#111;transform:scaleX(0.9817);transform-origin:0 0;">28 500,00 ₽</div>
<div class="t" style="left:1290.60px;top:440px;font-size:13.7px;font-weight:bold;color:#111;transform:scaleX(0.9790);transform-origin:0 0;">28 500,00 ₽</div>
<div class="a" style="left:300px;top:465px;width:783px;height:9px;background:#cbccd9"></div>
<svg style="left:288px;top:464px" width="8" height="11"><path d="M1 5.5L6.5 1v9z" fill="#6a6a6a"/></svg>
<svg style="left:1400px;top:464px" width="8" height="11"><path d="M7 5.5L1.5 1v9z" fill="#6a6a6a"/></svg>
<div class="a" style="left:277px;top:484px;width:1131px;height:3px;background:#e3e3e3"></div>
<div class="a" style="left:277px;top:487px;width:1131px;height:221px;background:#f3f3f3"></div>
<div class="a" style="left:277px;top:514px;width:1131px;height:5px;background:#a5a5a5"></div>
<div class="a" style="left:281px;top:491px;width:136px;height:28px;background:#fff"></div>
<div class="t" style="left:292.84px;top:498px;font-size:12.3px;font-weight:normal;color:#1a1a1a;transform:scaleX(1.0247);transform-origin:0 0;">Детализация счёта</div>
<div class="a" style="left:278px;top:520px;width:1121px;height:184px;border:1px solid #acacac;border-bottom:none;background:#f4f4f4;box-shadow:inset 1px 1px 0 #fff"></div>
<div class="a" style="left:277px;top:704px;width:1131px;height:4px;background:#c6c6c6"></div>
<div class="a" style="left:1399px;top:520px;width:9px;height:184px;background:#f0f0f0"></div>
<div class="a" style="left:1400px;top:536px;width:8px;height:75px;background:#cdcdcd"></div>
<svg style="left:1404px;top:525px" width="10" height="6"><path d="M1 5L5 1.5L9 5" fill="none" stroke="#777" stroke-width="1.2"/></svg>
<svg style="left:1404px;top:692px" width="10" height="6"><path d="M1 1L5 4.5L9 1" fill="none" stroke="#777" stroke-width="1.2"/></svg>
<div class="t" style="left:287.94px;top:530px;font-size:13.7px;font-weight:bold;color:#111;transform:scaleX(0.9359);transform-origin:0 0;">Детализация счета</div>
<div class="a" style="left:286px;top:566px;width:13px;height:13px;background:#fff;border:1px solid #cbcbcb"></div>
<div class="t" style="left:302.35px;top:567px;font-size:12.3px;font-weight:normal;color:#1a1a1a;transform:scaleX(1.0674);transform-origin:0 0;">Показать отпуски</div>
<div class="a" style="left:1286px;top:534px;width:105px;height:23px;background:#4573a8"></div>
<div class="t" style="left:1290.93px;top:541px;font-size:12.6px;font-weight:normal;color:#fff;transform:scaleX(1.0623);transform-origin:0 0;">Выбор колонок</div>
<div class="a" style="left:284px;top:583px;width:1109px;height:120px;background:#f5f5f5;border:1px solid #d3d3e3"></div>
<div class="a" style="left:285px;top:611px;width:1107px;height:45px;background:#fff;border-top:1px solid #d3d3e3;border-bottom:1px solid #d3d3e3"></div>
<div class="a" style="left:285px;top:633px;width:1107px;height:1px;background:#d3d3e3"></div>
<div class="a" style="left:326px;top:584px;width:1px;height:118px;background:#d3d3e3"></div>
<div class="a" style="left:526px;top:584px;width:1px;height:118px;background:#d3d3e3"></div>
<div class="a" style="left:626px;top:584px;width:1px;height:118px;background:#d3d3e3"></div>
<div class="a" style="left:776px;top:584px;width:1px;height:118px;background:#d3d3e3"></div>
<div class="a" style="left:876px;top:584px;width:1px;height:118px;background:#d3d3e3"></div>
<div class="a" style="left:1026px;top:584px;width:1px;height:118px;background:#d3d3e3"></div>
<div class="a" style="left:1146px;top:584px;width:1px;height:118px;background:#d3d3e3"></div>
<div class="t" style="left:330.64px;top:590px;font-size:13.7px;font-weight:bold;color:#111;transform:scaleX(0.9616);transform-origin:0 0;">Назначение</div>
<div class="t" style="left:530.12px;top:590px;font-size:13.7px;font-weight:bold;color:#111;transform:scaleX(0.9892);transform-origin:0 0;">Кол-во</div>
<div class="t" style="left:630.24px;top:590px;font-size:13.7px;font-weight:bold;color:#111;transform:scaleX(0.9668);transform-origin:0 0;">Цена за ед.</div>
<div class="t" style="left:780.78px;top:590px;font-size:13.7px;font-weight:bold;color:#111;transform:scaleX(0.9475);transform-origin:0 0;">Скидка</div>
<div class="t" style="left:880.39px;top:590px;font-size:13.7px;font-weight:bold;color:#111;transform:scaleX(0.9645);transform-origin:0 0;">Цена</div>
<div class="t" style="left:1031.24px;top:590px;font-size:13.7px;font-weight:bold;color:#111;transform:scaleX(0.9288);transform-origin:0 0;">Дата</div>
<div class="t" style="left:330.96px;top:617px;font-size:12.6px;font-weight:normal;color:#111;transform:scaleX(1.0329);transform-origin:0 0;">Массаж - 10 минут</div>
<div class="t" style="left:615.76px;top:617px;font-size:12.6px;font-weight:normal;color:#111;transform:scaleX(1.0693);transform-origin:0 0;">5</div>
<div class="t" style="left:723.84px;top:617px;font-size:12.6px;font-weight:normal;color:#111;transform:scaleX(0.9889);transform-origin:0 0;">900,00 ₽</div>
<div class="t" style="left:780.87px;top:617px;font-size:12.6px;font-weight:normal;color:#111;transform:scaleX(0.9804);transform-origin:0 0;">0%</div>
<div class="t" style="left:963.95px;top:617px;font-size:12.6px;font-weight:normal;color:#111;transform:scaleX(0.9837);transform-origin:0 0;">4 500,00 ₽</div>
<div class="t" style="left:1030.37px;top:617px;font-size:12.6px;font-weight:normal;color:#111;transform:scaleX(0.9864);transform-origin:0 0;">18.02.2022</div>
<div class="a" style="left:296px;top:619px;width:4px;height:8px;background:linear-gradient(#19b526,#0a9c14 60%,#3fd04a)"></div>
<div class="a" style="left:301px;top:619px;width:4px;height:8px;background:linear-gradient(#e6e6e6,#d0d0d0)"></div>
<div class="a" style="left:306px;top:619px;width:4px;height:8px;background:linear-gradient(#e6e6e6,#d0d0d0)"></div>
<div class="a" style="left:311px;top:619px;width:4px;height:8px;background:linear-gradient(#e6e6e6,#d0d0d0)"></div>
<div class="t" style="left:330.96px;top:639px;font-size:12.6px;font-weight:normal;color:#111;transform:scaleX(1.0329);transform-origin:0 0;">Массаж - 40 минут</div>
<div class="t" style="left:608.40px;top:639px;font-size:12.6px;font-weight:normal;color:#111;transform:scaleX(1.0543);transform-origin:0 0;">10</div>
<div class="t" style="left:713.88px;top:639px;font-size:12.6px;font-weight:normal;color:#111;transform:scaleX(0.9816);transform-origin:0 0;">2 400,00 ₽</div>
<div class="t" style="left:780.87px;top:639px;font-size:12.6px;font-weight:normal;color:#111;transform:scaleX(0.9804);transform-origin:0 0;">0%</div>
<div class="t" style="left:956.78px;top:639px;font-size:12.6px;font-weight:normal;color:#111;transform:scaleX(0.9880);transform-origin:0 0;">24 000,00 ₽</div>
<div class="t" style="left:1030.37px;top:639px;font-size:12.6px;font-weight:normal;color:#111;transform:scaleX(0.9864);transform-origin:0 0;">18.02.2022</div>
<div class="a" style="left:296px;top:641px;width:4px;height:8px;background:linear-gradient(#19b526,#0a9c14 60%,#3fd04a)"></div>
<div class="a" style="left:301px;top:641px;width:4px;height:8px;background:linear-gradient(#e6e6e6,#d0d0d0)"></div>
<div class="a" style="left:306px;top:641px;width:4px;height:8px;background:linear-gradient(#e6e6e6,#d0d0d0)"></div>
<div class="a" style="left:311px;top:641px;width:4px;height:8px;background:linear-gradient(#e6e6e6,#d0d0d0)"></div>
<div class="t" style="left:907.94px;top:671px;font-size:13.7px;font-weight:bold;color:#111;transform:scaleX(0.9683);transform-origin:0 0;">Итого:28 500,00 ₽</div>
</body></html>
